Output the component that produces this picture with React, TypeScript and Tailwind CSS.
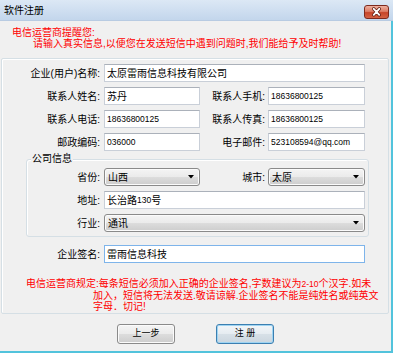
import React from "react"

// 输入框
function TextBox({ children, className = "", focus = false }: { children?: React.ReactNode; className?: string; focus?: boolean }) {
  return (
    <div
      className={
        "h-[18px] flex items-center pl-[2px] bg-white whitespace-nowrap overflow-hidden border " +
        (focus ? "border-[#7eb4ea] " : "border-[#c9cfd8] border-t-[#abb1ba] ") +
        className
      }
    >
      {children}
    </div>
  )
}

// 下拉框
function Combo({ children, className = "" }: { children?: React.ReactNode; className?: string }) {
  return (
    <div
      className={
        "h-[18px] flex items-center justify-between pl-[3px] pr-[5px] rounded-[3px] border border-[#8a8a8a] bg-[linear-gradient(#f4f4f4_0%,#ebebeb_48%,#dcdcdc_52%,#cdcdcd_100%)] shadow-[inset_0_0_0_1px_#fbfbfb] " +
        className
      }
    >
      <span>{children}</span>
      <svg width="6" height="4" viewBox="0 0 6 4">
        <path d="M0 0h6L3 3.5z" fill="#000" />
      </svg>
    </div>
  )
}

const Num = ({ children }: { children: React.ReactNode }) => (
  <span className="text-[8.5px]">{children}</span>
)

function Btn({ children, primary = false }: { children: React.ReactNode; primary?: boolean }) {
  return (
    <div
      className={
        "w-[58px] h-[20px] flex items-center justify-center text-[9px] rounded-[3px] border " +
        (primary
          ? "border-[#3c7fb1] bg-[linear-gradient(#f2f6f9_0%,#e6ecf1_48%,#d7e0e7_52%,#cbd6df_100%)] shadow-[inset_0_0_0_1px_#9fd4f2]"
          : "border-[#8a8a8a] bg-[linear-gradient(#f4f4f4_0%,#ebebeb_48%,#dcdcdc_52%,#cdcdcd_100%)] shadow-[inset_0_0_0_1px_#fbfbfb]")
      }
    >
      {children}
    </div>
  )
}

export default function App() {
  return (
    <div className="w-[393px] h-[353px] flex flex-col bg-[#f0f0f0] text-[10px] text-black font-['Liberation_Sans','Noto_Sans_CJK_SC',sans-serif] overflow-hidden">
      {/* 标题栏 */}
      <div className="h-[21px] shrink-0 flex items-start justify-between pl-[4px] pr-[4px] bg-[linear-gradient(#dce8f5,#c3d6ec)] border-b border-[#b8cbe2]">
        <span className="mt-[5px] leading-[11px]">软件注册</span>
        <div className="mt-[5px] w-[25px] h-[14px] rounded-[3px] border border-[#7d2a1e] bg-[linear-gradient(#eeb0a0_0%,#dd7d66_45%,#c7452a_55%,#d46244_100%)] flex items-center justify-center">
          <svg width="25" height="14" viewBox="0 0 25 14">
            <path d="M9.5 3.5L15.5 10M15.5 3.5L9.5 10" stroke="#5b1a10" strokeWidth="3.6" strokeLinecap="round" />
            <path d="M9.5 3.5L15.5 10M15.5 3.5L9.5 10" stroke="#fff" strokeWidth="2" strokeLinecap="round" />
          </svg>
        </div>
      </div>

      <div className="flex-1 flex flex-col border-r-2 border-b-2 border-[#52c3dc]">
        {/* 提示 */}
        <div className="pt-[6px] pl-[12px] text-[#f00] leading-[11px] whitespace-nowrap">
          <div>电信运营商提醒您:</div>
          <div className="pl-[21px]">请输入真实信息,以便您在发送短信中遇到问题时,我们能给予及时帮助!</div>
        </div>

        {/* 主面板 */}
        <div className="mt-[9px] ml-[1px] w-[388px] h-[256px] shrink-0 border border-[#d5dfe5] rounded-[2px] shadow-[inset_1px_1px_0_#fff] pt-[5px] pl-[1px] flex flex-col gap-[5px]">
          <div className="flex items-center">
            <span className="w-[97px] text-right">企业(用户)名称:</span>
            <TextBox className="ml-[4px] w-[261px]">太原雷雨信息科技有限公司</TextBox>
          </div>
          <div className="flex items-center">
            <span className="w-[97px] text-right">联系人姓名:</span>
            <TextBox className="ml-[4px] w-[96px]">苏丹</TextBox>
            <span className="w-[65px] text-right">联系人手机:</span>
            <TextBox className="ml-[3px] w-[97px]"><Num>18636800125</Num></TextBox>
          </div>
          <div className="flex items-center">
            <span className="w-[97px] text-right">联系人电话:</span>
            <TextBox className="ml-[4px] w-[96px]"><Num>18636800125</Num></TextBox>
            <span className="w-[65px] text-right">联系人传真:</span>
            <TextBox className="ml-[3px] w-[97px]"><Num>18636800125</Num></TextBox>
          </div>
          <div className="flex items-center">
            <span className="w-[97px] text-right">邮政编码:</span>
            <TextBox className="ml-[4px] w-[96px]"><Num>036000</Num></TextBox>
            <span className="w-[65px] text-right">电子邮件:</span>
            <TextBox className="ml-[3px] w-[97px]"><Num>523108594@qq.com</Num></TextBox>
          </div>

          {/* 公司信息 */}
          <div className="relative mt-[3px] ml-[23px] w-[343px] border border-[#d5dfe5] rounded-[3px] shadow-[inset_1px_1px_0_#fff] pt-[8px] pb-[4px] flex flex-col gap-[5px]">
            <span className="absolute -top-[7px] left-[4px] px-[1px] bg-[#f0f0f0] leading-[12px]">公司信息</span>
            <div className="flex items-center">
              <span className="w-[73px] text-right">省份:</span>
              <Combo className="ml-[4px] w-[96px]">山西</Combo>
              <span className="w-[65px] text-right">城市:</span>
              <Combo className="ml-[3px] w-[97px]">太原</Combo>
            </div>
            <div className="flex items-center">
              <span className="w-[73px] text-right">地址:</span>
              <TextBox className="ml-[4px] w-[261px]">长治路<Num>130</Num>号</TextBox>
            </div>
            <div className="flex items-center">
              <span className="w-[73px] text-right">行业:</span>
              <Combo className="ml-[4px] w-[261px]">通讯</Combo>
            </div>
          </div>

          <div className="flex items-center mt-[3px]">
            <span className="w-[97px] text-right">企业签名:</span>
            <TextBox focus className="ml-[4px] w-[261px]">雷雨信息科技</TextBox>
          </div>

          <div className="mt-[10px] pl-[23px] text-[#f00] leading-[11px] whitespace-nowrap">
            <div>电信运营商规定:每条短信必须加入正确的企业签名,字数建议为<Num>2-10</Num>个汉字.如未</div>
            <div className="pl-[67px]">加入，短信将无法发送.敬请谅解.企业签名不能是纯姓名或纯英文</div>
            <div className="pl-[67px]">字母．切记!</div>
          </div>
        </div>

        {/* 按钮 */}
        <div className="mt-[10px] flex justify-center gap-[41px]">
          <Btn>上一步</Btn>
          <Btn primary>注 册</Btn>
        </div>
      </div>
    </div>
  )
}
